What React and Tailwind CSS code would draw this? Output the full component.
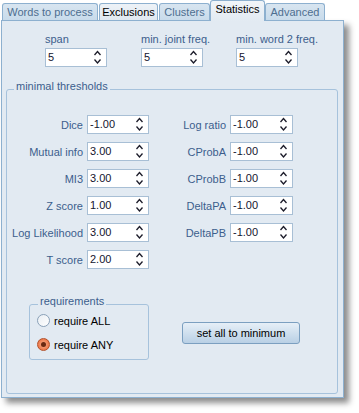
import React from "react";

const Arrows = () => (
  <svg width="9" height="17" viewBox="0 0 9 17" className="shrink-0">
    <path d="M1.5 6 L4.5 2.5 L7.5 6" fill="none" stroke="#1c1c2a" strokeWidth="1.3" />
    <path d="M1.5 10.5 L4.5 14 L7.5 10.5" fill="none" stroke="#1c1c2a" strokeWidth="1.3" />
  </svg>
);

const Spin = ({ value, className = "w-[62px]" }) => (
  <div className={`flex h-[19px] items-center justify-between border border-[#a8bfd5] bg-white pl-[2px] pr-[4px] ${className}`}>
    <span className="leading-none text-[#14142e]">{value}</span>
    <Arrows />
  </div>
);

const Row = ({ label, value, className }) => (
  <div className="flex items-center justify-end gap-[4px]">
    <span className="leading-[14px] text-[#3c5e8d]">{label}</span>
    <Spin value={value} className={className} />
  </div>
);

const Tab = ({ label, className, active, dark }) =>
  active ? (
    <div className={`relative z-10 -mb-px flex h-[21px] items-center justify-center rounded-t-[3px] border border-b-0 border-[#8db0cf] bg-linear-to-b from-[#f1f5f9] to-[#e2eaf2] pb-[3px] text-black ${className}`}>
      {label}
    </div>
  ) : (
    <div className={`flex h-[17px] items-center justify-center rounded-t-[3px] border border-b-0 border-[#8db0cf] ${dark ? "bg-linear-to-b from-[#edf2f7] to-[#e0e8f0] text-black" : "bg-linear-to-b from-[#d8e5f0] to-[#c8dbeb] text-[#4d6e90]"} ${className}`}>
      {label}
    </div>
  );

const Radio = ({ checked, label }) => (
  <div className="flex h-[13px] items-center gap-[4px]">
    {checked ? (
      <div className="flex h-[13px] w-[13px] items-center justify-center rounded-full border border-[#b3512a] bg-[radial-gradient(circle,#f7b08e_0%,#ee7a4c_70%,#e06a3c_100%)]">
        <div className="h-[5px] w-[5px] rounded-full bg-[#6a2912]" />
      </div>
    ) : (
      <div className="h-[13px] w-[13px] rounded-full border border-[#8aa1b8] bg-linear-to-br from-[#e9eef3] to-white" />
    )}
    <span className="leading-[14px] text-black">{label}</span>
  </div>
);

export default function App() {
  const left = [
    ["Dice", "-1.00"],
    ["Mutual info", "3.00"],
    ["MI3", "3.00"],
    ["Z score", "1.00"],
    ["Log Likelihood", "3.00"],
    ["T score", "2.00"],
  ];
  const right = [
    ["Log ratio", "-1.00"],
    ["CProbA", "-1.00"],
    ["CProbB", "-1.00"],
    ["DeltaPA", "-1.00"],
    ["DeltaPB", "-1.00"],
  ];

  return (
    <div className="h-[413px] w-[359px] bg-white font-['Liberation_Sans',Arial,sans-serif] text-[11px]">
      <div className="flex h-[20px] items-end pl-[2px]">
        <Tab label="Words to process" className="w-[96px]" />
        <Tab label="Exclusions" className="ml-px w-[59px]" dark />
        <Tab label="Clusters" className="ml-px w-[51px]" />
        <Tab label="Statistics" className="w-[55px]" active />
        <Tab label="Advanced" className="w-[60px]" />
      </div>
      <div className="ml-px flex h-[378px] w-[343px] flex-col border border-[#8db0cf] bg-[#e2eaf2] shadow-[5px_5px_6px_rgba(0,0,0,0.45)]">
        <div className="flex pl-[43px] pt-[11px]">
          <div className="flex flex-col gap-[2px]">
            <span className="leading-[14px] text-[#3c5e8d]">span</span>
            <Spin value="5" />
          </div>
          <div className="ml-[34px] flex flex-col gap-[2px]">
            <span className="leading-[14px] text-[#3c5e8d]">min. joint freq.</span>
            <Spin value="5" />
          </div>
          <div className="ml-[26px] flex flex-col gap-[2px]">
            <span className="leading-[14px] text-[#3c5e8d]">min. word 2 freq.</span>
            <Spin value="5" />
          </div>
        </div>

        <fieldset className="mb-[3px] ml-[4px] mr-[5px] mt-[15px] flex-1 rounded-[3px] border border-[#a6c2dc]">
          <legend className="ml-[7px] px-[2px] leading-[14px] text-[#3c5e8d]">
            <span className="relative -top-[3px]">minimal thresholds</span>
          </legend>
          <div className="flex pt-[19px]">
            <div className="flex w-[142px] flex-col gap-[8px]">
              {left.map(([l, v]) => (
                <Row key={l} label={l} value={v} className="w-[62px]" />
              ))}
            </div>
            <div className="flex w-[144px] flex-col gap-[8px]">
              {right.map(([l, v]) => (
                <Row key={l} label={l} value={v} className="w-[63px]" />
              ))}
            </div>
          </div>

          <div className="mt-[28px] flex items-start">
            <fieldset className="ml-[22px] w-[120px] rounded-[3px] border border-[#a6c2dc]">
              <legend className="ml-[8px] px-[2px] leading-[14px] text-[#3c5e8d]">
                <span className="relative -top-[3px]">requirements</span>
              </legend>
              <div className="flex flex-col gap-[11px] pb-[8px] pl-[7px] pt-[3px]">
                <Radio label="require ALL" />
                <Radio label="require ANY" checked />
              </div>
            </fieldset>
            <button className="ml-[33px] mt-[25px] h-[22px] w-[118px] rounded-[3px] border border-[#7b9fc0] bg-linear-to-b from-[#e6eff7] to-[#b9d0e5] text-black">
              set all to minimum
            </button>
          </div>
        </fieldset>
      </div>
    </div>
  );
}
